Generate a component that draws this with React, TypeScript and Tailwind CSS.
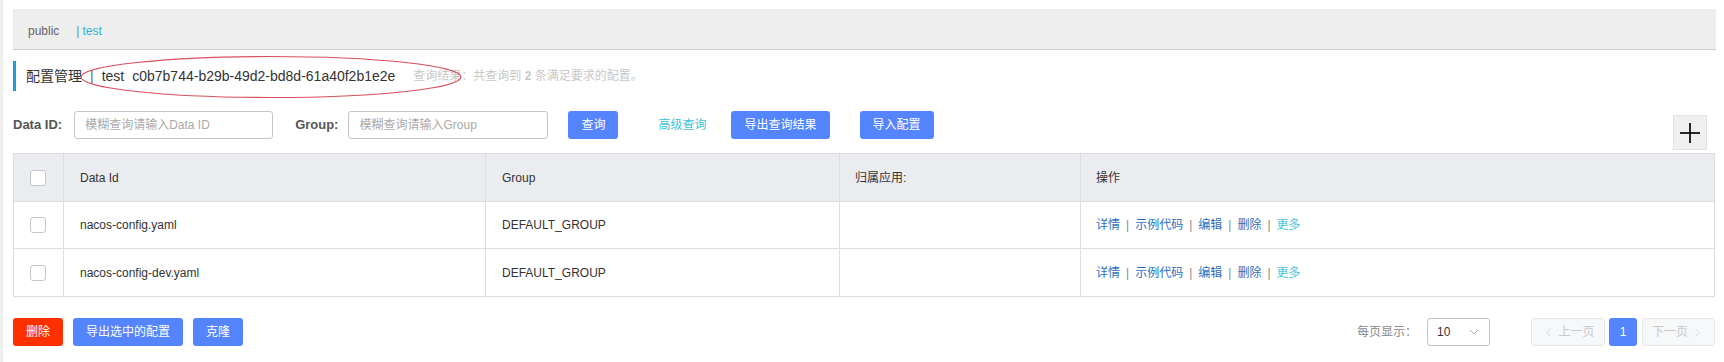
import React from 'react';
import { ChevronDown, ChevronLeft, ChevronRight } from 'lucide-react';

const font = { fontFamily: '"Liberation Sans", "Noto Sans CJK SC", sans-serif' };

interface ConfigRow {
  dataId: string;
  group: string;
  app: string;
}

const rows: ConfigRow[] = [
  { dataId: 'nacos-config.yaml', group: 'DEFAULT_GROUP', app: '' },
  { dataId: 'nacos-config-dev.yaml', group: 'DEFAULT_GROUP', app: '' },
];

const Checkbox = () => (
  <span className="block w-4 h-4 rounded-[3px] border border-[#c4c6cf] bg-white" />
);

const BlueButton = ({ children }: { children: React.ReactNode }) => (
  <button className="h-[28px] px-[13px] rounded-[3px] bg-[#5584ff] text-white text-[12px] leading-none">
    {children}
  </button>
);

const Sep = () => <span className="mx-[6px] text-[#888]">|</span>;

export default function App() {
  return (
    <div className="flex w-full h-[362px] bg-white overflow-hidden" style={font}>
      <div className="w-[3px] bg-[#eeeeee] shrink-0" />
      <div className="flex-1 pl-[10px] pr-[8px] pt-[9px]">
        {/* namespace bar */}
        <div className="h-[41px] bg-[#eeeeee] border-b border-[#cccccc] flex items-center pl-[15px] pt-[4px] text-[12px]">
          <span className="text-[#666]">public</span>
          <span className="ml-[17px] text-[#5a8fcc]">|</span>
          <span className="ml-[3px] text-[#2fb0d8]">test</span>
        </div>

        {/* title */}
        <div className="relative mt-[11px] h-[30px] flex items-center border-l-[3px] border-[#209bd5] pl-[10px]">
          <span className="text-[14px] text-[#333]">配置管理</span>
          <span className="mx-[8px] text-[14px] text-[#666]">|</span>
          <span className="text-[14px] text-[#333]">test</span>
          <span className="ml-[8px] text-[14px] text-[#333]">c0b7b744-b29b-49d2-bd8d-61a40f2b1e2e</span>
          <span className="ml-[18px] text-[12px] text-[#c8c8c8]">
            查询结果：共查询到 <b className="font-bold">2</b> 条满足要求的配置。
          </span>
          <svg
            className="absolute left-[62px] top-[-6px] pointer-events-none"
            width="386"
            height="46"
            viewBox="0 0 386 46"
          >
            <ellipse cx="193" cy="22" rx="190" ry="20.5" fill="none" stroke="#d8505c" strokeWidth="1.2" />
          </svg>
        </div>

        {/* search row */}
        <div className="mt-[20px] flex items-start h-[39px]">
          <div className="h-[28px] flex items-center">
            <span className="text-[13px] font-bold text-[#555]">Data ID:</span>
            <input
              className="ml-[12px] w-[199px] h-[28px] rounded-[3px] border border-[#c4c6cf] px-[10px] text-[12px] outline-none placeholder:text-[#aaa]"
              placeholder="模糊查询请输入Data ID"
            />
            <span className="ml-[22px] text-[13px] font-bold text-[#555]">Group:</span>
            <input
              className="ml-[10px] w-[200px] h-[28px] rounded-[3px] border border-[#c4c6cf] px-[10px] text-[12px] outline-none placeholder:text-[#aaa]"
              placeholder="模糊查询请输入Group"
            />
            <div className="ml-[20px]">
              <BlueButton>查询</BlueButton>
            </div>
            <span className="ml-[40px] text-[12px] text-[#3cc3d9]">高级查询</span>
            <div className="ml-[25px]">
              <BlueButton>导出查询结果</BlueButton>
            </div>
            <div className="ml-[30px]">
              <BlueButton>导入配置</BlueButton>
            </div>
          </div>
          <div className="ml-auto mr-[9px] mt-[4px] w-[34px] h-[35px] bg-[#f0f0f0] border border-[#e2e2e2] flex items-center justify-center">
            <svg width="22" height="22" viewBox="0 0 22 22">
              <line x1="1" y1="11" x2="21" y2="11" stroke="#111" strokeWidth="1.8" />
              <line x1="11" y1="1" x2="11" y2="21" stroke="#111" strokeWidth="1.8" />
            </svg>
          </div>
        </div>

        {/* table */}
        <div className="mt-[3px] mr-[1px] border border-[#dcdee3] text-[12px] text-[#333]">
          <div className="grid grid-cols-[50px_422px_354px_241px_1fr] h-[48px] bg-[#ebecf0] border-b border-[#dcdee3]">
            <div className="flex items-center pl-[16px] border-r border-[#dcdee3]">
              <Checkbox />
            </div>
            <div className="flex items-center pl-[16px] border-r border-[#dcdee3]">Data Id</div>
            <div className="flex items-center pl-[16px] border-r border-[#dcdee3]">Group</div>
            <div className="flex items-center pl-[15px] border-r border-[#dcdee3]">归属应用:</div>
            <div className="flex items-center pl-[15px]">操作</div>
          </div>
          {rows.map((row, i) => (
            <div
              key={row.dataId}
              className={`grid grid-cols-[50px_422px_354px_241px_1fr] h-[47px] ${i === 0 ? 'border-b border-[#dcdee3]' : ''}`}
            >
              <div className="flex items-center pl-[16px] border-r border-[#dcdee3]">
                <Checkbox />
              </div>
              <div className="flex items-center pl-[16px] border-r border-[#dcdee3]">{row.dataId}</div>
              <div className="flex items-center pl-[16px] border-r border-[#dcdee3]">{row.group}</div>
              <div className="flex items-center pl-[15px] border-r border-[#dcdee3]">{row.app}</div>
              <div className="flex items-center pl-[15px]">
                <span className="text-[#2d6fc2]">详情</span>
                <Sep />
                <span className="text-[#2d6fc2]">示例代码</span>
                <Sep />
                <span className="text-[#2d6fc2]">编辑</span>
                <Sep />
                <span className="text-[#2d6fc2]">删除</span>
                <Sep />
                <span className="text-[#4cc4d6]">更多</span>
              </div>
            </div>
          ))}
        </div>

        {/* footer */}
        <div className="mt-[21px] flex items-center">
          <button className="h-[28px] px-[13px] rounded-[3px] bg-[#ff3000] text-white text-[12px] leading-none">
            删除
          </button>
          <div className="ml-[10px]">
            <BlueButton>导出选中的配置</BlueButton>
          </div>
          <div className="ml-[10px]">
            <BlueButton>克隆</BlueButton>
          </div>

          <div className="ml-auto mr-[1px] flex items-center text-[12px]">
            <span className="text-[#888]">每页显示：</span>
            <div className="ml-[10px] w-[63px] h-[28px] rounded-[3px] border border-[#c4c6cf] flex items-center justify-between pl-[9px] pr-[7px] text-[#333]">
              <span>10</span>
              <ChevronDown size={16} strokeWidth={1} color="#888" />
            </div>
            <div className="ml-[41px] w-[74px] h-[28px] rounded-[3px] border border-[#e6e7eb] bg-[#f7f8fa] flex items-center justify-center text-[#c8c8c8]">
              <ChevronLeft size={15} strokeWidth={1.2} />
              <span className="ml-[2px]">上一页</span>
            </div>
            <div className="ml-[4px] w-[28px] h-[28px] rounded-[3px] bg-[#5584ff] text-white flex items-center justify-center">
              1
            </div>
            <div className="ml-[5px] w-[73px] h-[28px] rounded-[3px] border border-[#e6e7eb] bg-[#f7f8fa] flex items-center justify-center text-[#c8c8c8]">
              <span className="mr-[2px]">下一页</span>
              <ChevronRight size={15} strokeWidth={1.2} />
            </div>
          </div>
        </div>
      </div>
    </div>
  );
}
